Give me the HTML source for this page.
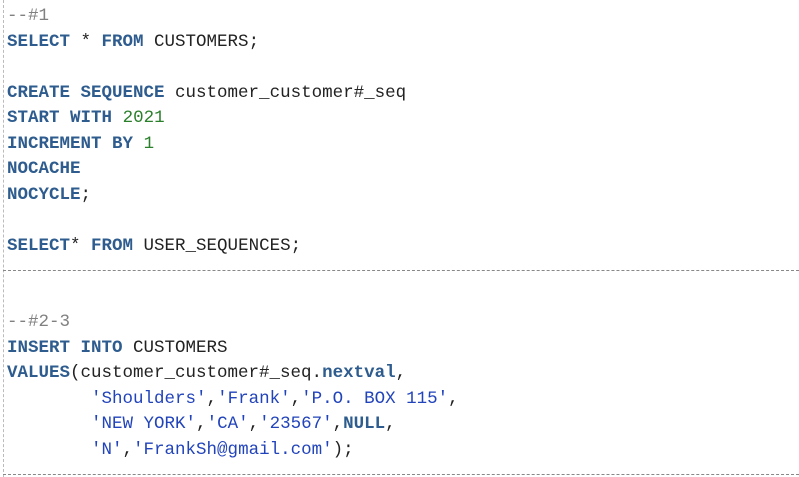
<!DOCTYPE html>
<html><head><style>
body{margin:0;width:799px;height:477px;background:#fff;overflow:hidden;position:relative}
.g{position:absolute;left:3px;top:0;height:477px;border-left:1px dashed #bbb}
pre{position:absolute;left:7px;top:4px;margin:0;font-family:"Liberation Mono",monospace;font-size:17.5px;line-height:25.5px;color:#222}
.k{color:#2e5c8e;font-weight:bold}
.c{color:#808080}
.n{color:#2a7f2a}
.s{color:#2244bb}
.d{position:absolute;left:3px;width:796px;border-top:1px dashed #888}
</style></head><body>
<div class="g"></div>
<pre><span class="c">--#1</span>
<span class="k">SELECT</span> * <span class="k">FROM</span> CUSTOMERS;

<span class="k">CREATE</span> <span class="k">SEQUENCE</span> customer_customer#_seq
<span class="k">START</span> <span class="k">WITH</span> <span class="n">2021</span>
<span class="k">INCREMENT</span> <span class="k">BY</span> <span class="n">1</span>
<span class="k">NOCACHE</span>
<span class="k">NOCYCLE</span>;

<span class="k">SELECT</span>* <span class="k">FROM</span> USER_SEQUENCES;


<span class="c">--#2-3</span>
<span class="k">INSERT</span> <span class="k">INTO</span> CUSTOMERS
<span class="k">VALUES</span>(customer_customer#_seq.<span class="k">nextval</span>,
        <span class="s">'Shoulders'</span>,<span class="s">'Frank'</span>,<span class="s">'P.O. BOX 115'</span>,
        <span class="s">'NEW YORK'</span>,<span class="s">'CA'</span>,<span class="s">'23567'</span>,<span class="k">NULL</span>,
        <span class="s">'N'</span>,<span class="s">'FrankSh@gmail.com'</span>);
</pre>
<div class="d" style="top:270px"></div>
<div class="d" style="top:474px"></div>
</body></html>
